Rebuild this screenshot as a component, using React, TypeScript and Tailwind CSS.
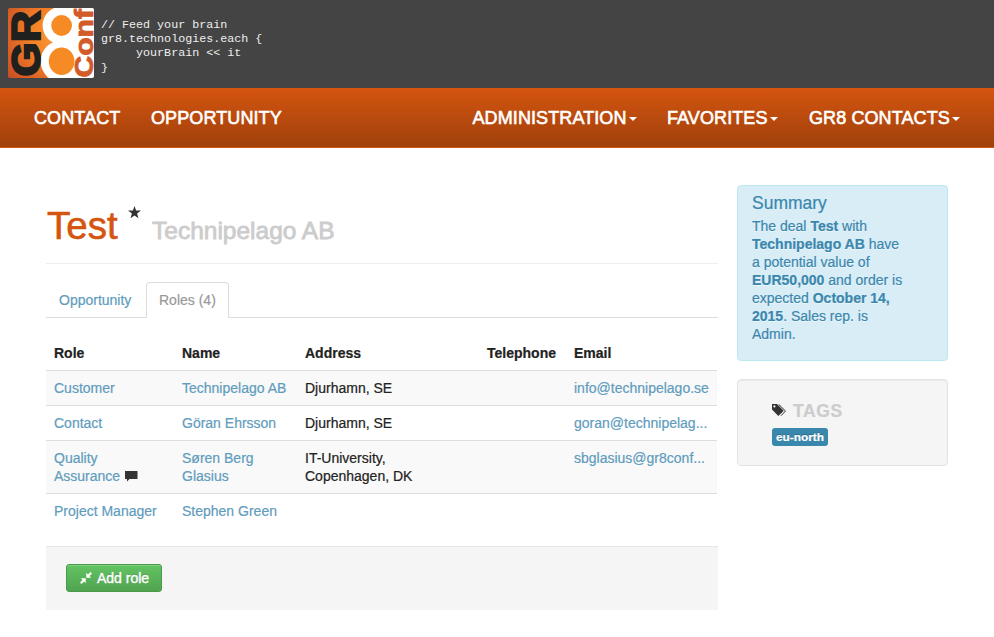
import React from "react";

const link = "text-[#5f9cbd]";

function Logo() {
  return (
    <svg width="86" height="70" viewBox="8 8 86 70" className="block shrink-0 rounded-[2px]">
      <defs>
        <radialGradient id="glow" gradientUnits="userSpaceOnUse" cx="58" cy="36" r="66">
          <stop offset="0" stopColor="#fb9a3c" />
          <stop offset="0.4" stopColor="#f58226" />
          <stop offset="1" stopColor="#c64c25" />
        </radialGradient>
      </defs>
      <rect x="8" y="8" width="86" height="70" fill="url(#glow)" />
      <rect x="62" y="8" width="32" height="70" fill="#fff" />
      <circle cx="61.6" cy="25.5" r="19" fill="#fff" />
      <circle cx="61.6" cy="61.3" r="21" fill="#fff" />
      <circle cx="61.6" cy="25.5" r="10.4" fill="#f68a25" />
      <ellipse cx="61.6" cy="61.3" rx="12.8" ry="13.8" fill="#f68a25" />
      <text transform="translate(39.5 76.5) rotate(-90)" fontFamily="Liberation Sans, sans-serif" fontWeight="700" fontSize="40" textLength="66" lengthAdjust="spacingAndGlyphs" fill="#20201e" stroke="#20201e" strokeWidth="1.8">GR</text>
      <text transform="translate(92.8 77.5) rotate(-90)" fontFamily="Liberation Sans, sans-serif" fontWeight="700" fontSize="25.5" textLength="68.5" lengthAdjust="spacingAndGlyphs" fill="#d35a29" stroke="#d35a29" strokeWidth="0.8">Conf</text>
    </svg>
  );
}

function NavItem({ label, width, caret = false }: { label: string; width: string; caret?: boolean }) {
  return (
    <a className={`flex items-center whitespace-nowrap ${width}`}>
      {label}
      {caret && <span className="ml-[2px] mt-[3px] border-x-4 border-t-4 border-x-transparent border-t-white" />}
    </a>
  );
}

function Comment() {
  return (
    <svg width="13" height="12" viewBox="0 0 13 12" className="ml-[5px] inline-block align-[-2px]">
      <path d="M0 0H12.5V8H4.5L2 10.5V8H0Z" fill="#333" />
    </svg>
  );
}

const rows = [
  { role: "Customer", name: "Technipelago AB", address: "Djurhamn, SE", email: "info@technipelago.se" },
  { role: "Contact", name: "Göran Ehrsson", address: "Djurhamn, SE", email: "goran@technipelag..." },
  { role: "Quality Assurance", name: "Søren Berg Glasius", address: "IT-University, Copenhagen, DK", email: "sbglasius@gr8conf...", note: true },
  { role: "Project Manager", name: "Stephen Green", address: "", email: "" },
];

export default function App() {
  return (
    <div className="h-[637px] w-[994px] overflow-hidden bg-white font-['Liberation_Sans',Arial,sans-serif] text-[14px] leading-[18px] text-[#222]">
      <header className="flex h-[88px] bg-[#444] pl-2 pt-2">
        <Logo />
        <pre className="ml-[7px] mt-[10px] font-['Liberation_Mono',monospace] text-[11.7px] leading-[14.2px] text-[#eee]">
          {"// Feed your brain\ngr8.technologies.each {\n     yourBrain << it\n}"}
        </pre>
      </header>
      <nav className="flex h-[60px] items-center justify-between border-b border-[#d4550f] bg-linear-to-b from-[#d4550f] to-[#a0400c] pl-[34px] pr-[34px] text-[18px] tracking-[0.1px] text-white [-webkit-text-stroke:0.6px_white]">
        <div className="flex">
          <NavItem label="CONTACT" width="w-[117px]" />
          <NavItem label="OPPORTUNITY" width="w-[130px]" />
        </div>
        <div className="flex">
          <NavItem label="ADMINISTRATION" width="w-[194.5px]" caret />
          <NavItem label="FAVORITES" width="w-[142px]" caret />
          <NavItem label="GR8 CONTACTS" width="w-[151px]" caret />
        </div>
      </nav>
      <div className="flex pl-[46px] pt-[37px] [-webkit-text-stroke:0.2px_currentColor]">
        <main className="w-[672px]">
          <div className="flex h-[79px] border-b border-[#eee] pt-[20px]">
            <h1 className="w-[82px] pl-px pt-px text-[38.5px] leading-[40px] text-[#d4550f] [-webkit-text-stroke:0.6px_#d4550f]">Test</h1>
            <svg width="13" height="13" viewBox="0 0 13 13" className="mt-px">
              <path d="M6.5 0L8.1 4.6H13L9.1 7.5L10.5 12.2L6.5 9.4L2.5 12.2L3.9 7.5L0 4.6H4.9Z" fill="#333" />
            </svg>
            <small className="ml-[11px] mt-[6px] text-[24.5px] leading-[40px] text-[#ccc] [-webkit-text-stroke:0.8px_#ccc]">Technipelago AB</small>
          </div>
          <div className="mt-[18px] flex h-[36px] border-b border-[#ddd]">
            <a className={`w-[100px] pl-[13px] pt-[9px] ${link}`}>Opportunity</a>
            <a className="h-[36px] w-[83px] rounded-t border border-b-0 border-[#ddd] bg-white pl-[12px] pt-[8px] text-[#999]">Roles (4)</a>
          </div>
          <table className="mt-[17px] w-[671px] table-fixed border-collapse text-left">
            <colgroup>
              <col className="w-[128px]" />
              <col className="w-[123px]" />
              <col className="w-[182px]" />
              <col className="w-[87px]" />
              <col className="w-[151px]" />
            </colgroup>
            <thead>
              <tr className="h-[35px]">
                {["Role", "Name", "Address", "Telephone", "Email"].map((h) => (
                  <th key={h} className="px-2 pt-[2px] font-bold">{h}</th>
                ))}
              </tr>
            </thead>
            <tbody>
              {rows.map((r) => (
                <tr key={r.role} className="border-t border-[#ddd] align-top odd:bg-[#f9f9f9]">
                  <td className={`whitespace-nowrap py-2 pl-2 ${link}`}>
                    {r.note ? <>Quality<br />Assurance<Comment /></> : r.role}
                  </td>
                  <td className={`py-2 pl-2 ${link}`}>{r.note ? <>Søren Berg<br />Glasius</> : r.name}</td>
                  <td className="py-2 pl-2 pr-14">{r.address}</td>
                  <td />
                  <td className={`whitespace-nowrap py-2 pl-2 ${link}`}>{r.email}</td>
                </tr>
              ))}
            </tbody>
          </table>
          <div className="mt-[18px] h-[64px] border-t border-[#e5e5e5] bg-[#f5f5f5] pl-5 pt-[17px]">
            <button className="flex h-[28px] w-[96px] items-center rounded-[3px] border border-[#4a9a4a] bg-linear-to-b from-[#62c462] to-[#51a351] pl-[13px] text-white shadow-[inset_0_1px_0_rgba(255,255,255,0.2)] [text-shadow:0_-1px_0_rgba(0,0,0,0.25)] [-webkit-text-stroke:0.4px_white]">
              <svg width="12" height="12" viewBox="0 0 12 12" className="mr-[5px]">
                <path d="M6.3 0.8V5.7H11.2L9.5 4L12 1.5L10.5 0L8 2.5ZM5.7 11.2V6.3H0.8L2.5 8L0 10.5L1.5 12L4 9.5Z" fill="#fff" />
              </svg>
              Add role
            </button>
          </div>
        </main>
        <aside className="ml-[19px] w-[211px]">
          <section className="h-[176px] rounded border border-[#bce8f1] bg-[#d9edf7] pl-[14px] pr-[34px] pt-[8px] text-[#3a87ad]">
            <h2 className="mb-[5px] text-[17.5px] leading-[18px]">Summary</h2>
            <p className="whitespace-nowrap [text-shadow:0_1px_0_rgba(255,255,255,0.5)]">
              The deal <b>Test</b> with<br /><b>Technipelago AB</b> have<br />a potential value of<br />
              <b>EUR50,000</b> and order is<br />expected <b>October 14,<br />2015</b>. Sales rep. is<br />Admin.
            </p>
          </section>
          <section className="mt-[18px] h-[87px] rounded border border-[#e3e3e3] bg-[#f5f5f5] pl-[34px] pt-[22px] shadow-[inset_0_1px_1px_rgba(0,0,0,0.05)]">
            <h3 className="flex items-center text-[17.5px] font-bold leading-[18px] tracking-[0.6px] text-[#ccc]">
              <svg width="15" height="13" viewBox="0 0 15 13" className="mr-[6px] -mt-px">
                <path fillRule="evenodd" d="M0 0H5L11.7 6.7L6.3 12L0 5.5ZM2.4 1.3A1.1 1.1 0 1 0 2.4 3.5A1.1 1.1 0 1 0 2.4 1.3" fill="#333" />
                <path d="M6.7 0.4L13.5 7L9 11.7" fill="none" stroke="#333" strokeWidth="1" />
              </svg>
              TAGS
            </h3>
            <span className="mt-[8px] block h-[18px] w-[56px] rounded-[3px] bg-[#3a87ad] text-center text-[11.84px] font-bold leading-[18px] text-white [text-shadow:0_-1px_0_rgba(0,0,0,0.25)]">eu-north</span>
          </section>
        </aside>
      </div>
    </div>
  );
}
